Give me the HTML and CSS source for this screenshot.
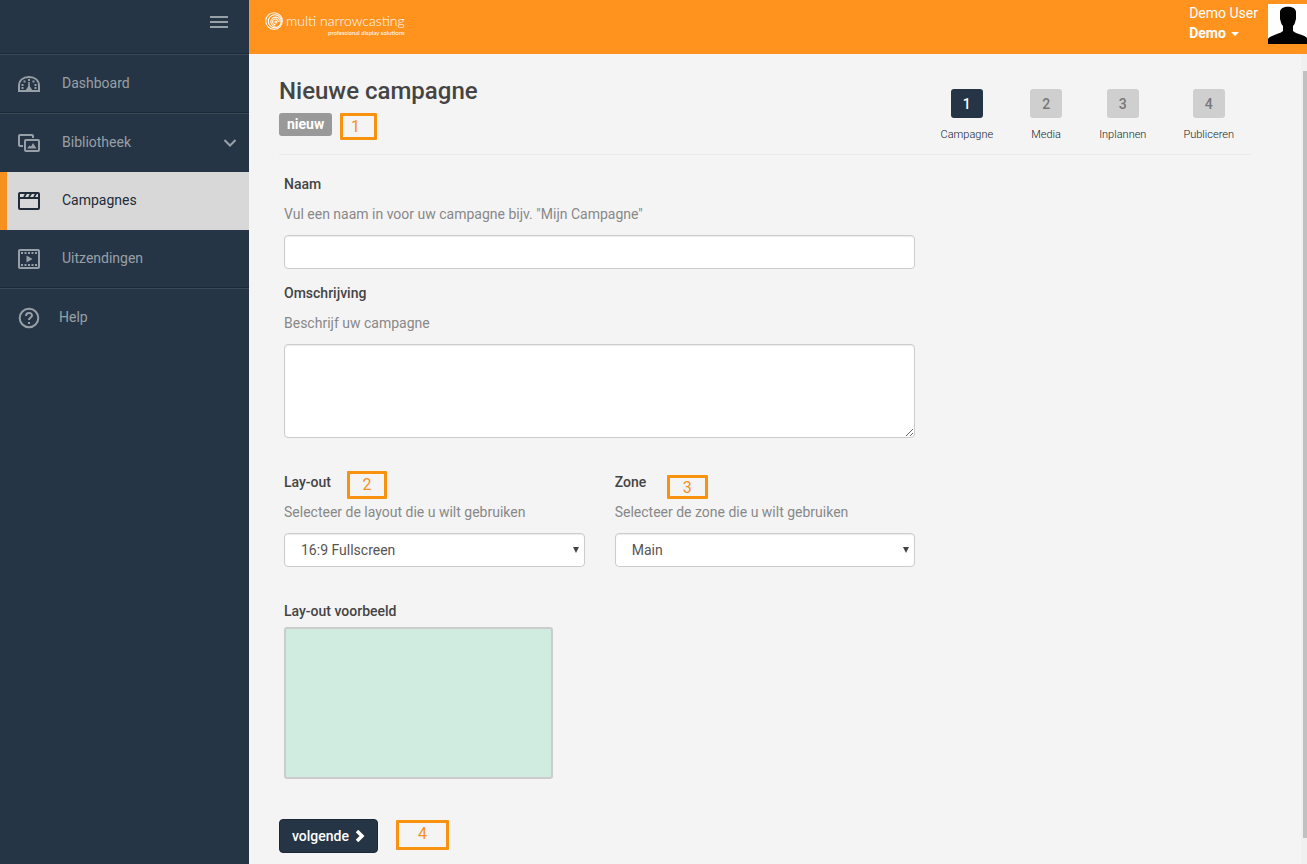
FILE: index.html
```html
<!DOCTYPE html>
<html lang="nl">
<head>
<meta charset="utf-8">
<title>Nieuwe campagne</title>
<link rel="stylesheet" href="styles.css">
</head>
<body>
<div class="app">
  <aside class="sidebar">
    <div class="sidebar-top">
      <button class="menu-toggle" type="button" aria-label="Menu">
        <svg width="18" height="12" viewBox="0 0 18 12"><path d="M0 1h18M0 6h18M0 11h18" stroke="currentColor" stroke-width="2"/></svg>
      </button>
    </div>
    <nav class="nav">
      <a class="nav-item lined-top lined-bottom" href="#">
        <svg class="nav-icon" width="24" height="24" viewBox="0 0 24 24" fill="none" stroke="currentColor"><path d="M2 19v-5C2 8.500 6 5 12 5s10 3.500 10 9v5z" stroke-width="2"/><path d="M12 10v6" stroke-width="1.600"/><path d="M12 13l3.500 5.500h-7z" fill="currentColor" stroke="none"/><path d="M11 7h2v2h-2zM6.500 8.500h2v2h-2zM15.500 8.500h2v2h-2zM4.500 12h2v2h-2zM17.500 12h2v2h-2zM4.500 15h2v2h-2zM17.500 15h2v2h-2z" fill="currentColor" stroke="none"/></svg>
        <span>Dashboard</span>
      </a>
      <a class="nav-item lined-top" href="#">
        <svg class="nav-icon" width="24" height="24" viewBox="0 0 24 24" fill="none" stroke="currentColor" stroke-width="2"><path d="M6 15H3Q2 15 2 14V5Q2 4 3 4h12Q16 4 16 5v2"/><rect x="8" y="9" width="14" height="11" rx="1"/><path d="M10 17.500l2.500-3 1.500 1 2-3.500 3.500 5.500z" fill="currentColor" stroke="none"/></svg>
        <span>Bibliotheek</span>
        <svg class="nav-chevron" width="12" height="8" viewBox="0 0 12 8" fill="none" stroke="currentColor" stroke-width="2"><path d="M.5 1L6 6.500 11.500 1"/></svg>
      </a>
      <a class="nav-item active" href="#">
        <svg class="nav-icon" width="24" height="24" viewBox="0 0 24 24" fill="none" stroke="currentColor" stroke-width="2"><rect x="2" y="4" width="20" height="16" rx="1"/><path d="M2 9h20"/><path d="M7 8l2.500-4M12 8l2.500-4M17 8l2.500-4" stroke-width="1.800"/></svg>
        <span>Campagnes</span>
      </a>
      <a class="nav-item lined-bottom" href="#">
        <svg class="nav-icon" width="24" height="24" viewBox="0 0 24 24" fill="none" stroke="currentColor"><rect x="2" y="3" width="20" height="18" rx="1" stroke-width="2"/><path d="M4 6h16M4 18h16" stroke-width="2" stroke-dasharray="2 1.500"/><path d="M9.500 8.500v7l6-3.500z" fill="currentColor" stroke="none"/></svg>
        <span>Uitzendingen</span>
      </a>
      <a class="nav-item help lined-top" href="#">
        <svg class="nav-icon" width="24" height="24" viewBox="0 0 24 24" fill="none" stroke="currentColor" stroke-width="2"><circle cx="12" cy="12" r="9.300"/><path d="M9 10c0-4 6-4 6-.5 0 2-3 2.200-3 4.500M12 16v2"/></svg>
        <span>Help</span>
      </a>
    </nav>
  </aside>

  <div class="page">
    <header class="topbar">
      <a class="brand" href="#">
        <svg class="brand-mark" width="19" height="19" viewBox="0 0 20 20" fill="none" stroke="#fff" stroke-width="1.100"><circle cx="9.500" cy="9.500" r="8.700"/><circle cx="10.300" cy="9.700" r="6.800"/><path d="M16 10.500A4.900 4.900 0 1 0 11 15.200"/><path d="M14 10.500A3 3 0 1 0 11 13.300"/><circle cx="11.500" cy="10.500" r="1.100"/></svg>
        <span class="brand-text">
          <span class="brand-name">multi narrowcasting</span>
          <span class="brand-tag">professional display solutions</span>
        </span>
      </a>
      <button class="user" type="button">
        <span class="user-text">
          <span>Demo User</span>
          <strong>Demo <i class="caret"></i></strong>
        </span>
        <svg class="avatar" width="39" height="40" viewBox="0 0 39 40"><path fill="#fff" d="M0 0h39v40H0z"/><path d="M0 40v-5c3-4 12-5 15-8v-5c-2-2-2-4-3-7V8c0-7 16-7 16 0v7c-1 3-1 5-3 7v5c3 3 12 4 14 7v6z"/></svg>
      </button>
    </header>

    <main class="content">
      <div class="heading">
        <div>
          <h1>Nieuwe campagne</h1>
          <div class="status"><span class="badge">nieuw</span><span class="callout callout-1">1</span></div>
        </div>
        <ol class="steps">
          <li class="current"><button type="button">1</button><span>Campagne</span></li>
          <li><button type="button">2</button><span>Media</span></li>
          <li><button type="button">3</button><span>Inplannen</span></li>
          <li><button type="button">4</button><span>Publiceren</span></li>
        </ol>
      </div>

      <form>
        <div class="fields">
          <div class="field">
            <label for="naam">Naam</label>
            <p>Vul een naam in voor uw campagne bijv. "Mijn Campagne"</p>
            <input id="naam" type="text">
          </div>
          <div class="field">
            <label for="omschrijving">Omschrijving</label>
            <p>Beschrijf uw campagne</p>
            <textarea id="omschrijving"></textarea>
          </div>
          <div class="pair">
            <div class="field">
              <label for="layout">Lay-out</label><span class="callout callout-2">2</span>
              <p>Selecteer de layout die u wilt gebruiken</p>
              <div class="select"><select id="layout"><option>16:9 Fullscreen</option></select></div>
            </div>
            <div class="field">
              <label for="zone">Zone</label><span class="callout callout-3">3</span>
              <p>Selecteer de zone die u wilt gebruiken</p>
              <div class="select"><select id="zone"><option>Main</option></select></div>
            </div>
          </div>
          <div class="preview-block">
            <h2>Lay-out voorbeeld</h2>
            <div class="preview"></div>
          </div>
        </div>
        <div class="actions">
          <button class="next" type="button">volgende
            <svg width="10" height="12" viewBox="0 0 10 12" fill="none" stroke="currentColor" stroke-width="3.500"><path d="M2 1l5 5-5 5"/></svg>
          </button>
          <span class="callout callout-4">4</span>
        </div>
      </form>
      <div class="scrollbar"><div class="thumb"></div></div>
    </main>
  </div>
</div>
</body>
</html>
```
FILE: styles.css
```css
* { box-sizing: border-box; }
body { margin: 0; font: 14px/20px Roboto, sans-serif; color: #444; background: #f4f4f4; }
button, input, textarea, select { font: inherit; color: inherit; }
button { border: 0; background: none; padding: 0; cursor: pointer; }
a { color: inherit; text-decoration: none; }
svg { display: block; flex: none; }
h1, h2, p, ol { margin: 0; padding: 0; }

.app { display: flex; min-height: 100vh; }

.sidebar { flex: none; width: 249px; background: #263545; color: #98a0a7; }
.sidebar-top { display: flex; justify-content: flex-end; align-items: flex-start; height: 54px; padding: 16px 21px; border-bottom: 1px solid #1b2937; }
.nav-item { display: flex; align-items: center; height: 59px; padding: 0 13px 0 17px; border: 0 solid; }
.nav-item span { padding-bottom: 2px; }
.nav-icon { margin-right: 21px; }
.nav-item.help .nav-icon { margin-right: 18px; }
.nav-chevron { margin-left: auto; }
.lined-top { border-top: 1px solid #3a4858; }
.lined-bottom { border-bottom: 1px solid #1b2937; }
.nav-item.active { height: 58px; padding-left: 10px; border-left: 7px solid #f6901e; background: #d8d8d8; color: #202c3a; }
.nav-item.active + .nav-item { height: 58px; }

.page { flex: 1; min-width: 0; display: flex; flex-direction: column; }
.topbar { display: flex; justify-content: space-between; align-items: flex-start; height: 54px; padding-left: 16px; background: #ff931e; color: #fff; }
.brand { display: flex; padding-top: 12px; }
.brand-text { display: flex; flex-direction: column; align-items: flex-end; margin-left: 2px; }
.brand-name { font: 300 14px/18px Lato, sans-serif; }
.brand-tag { font: 6px/6px Lato, sans-serif; }
.user { display: flex; padding-top: 4px; text-align: left; color: #fff; }
.user-text { display: flex; flex-direction: column; margin: -1px 10px 0 0; }
.caret { display: inline-block; margin-left: 2px; vertical-align: middle; border: 4px solid transparent; border-top-color: #fff; border-bottom: 0; }

.content { position: relative; flex: 1; padding: 24px 55px 11px 30px; }
.heading { display: flex; justify-content: space-between; height: 77px; border-bottom: 1px solid #ebebeb; }
h1 { font-size: 24px; line-height: 26px; font-weight: 500; }
.status { position: relative; display: flex; margin-top: 9px; }
.badge { height: 23px; padding: 0 8px; border-radius: 3px; background: #999; color: #fff; font-weight: 700; line-height: 23px; }
.steps { display: flex; gap: 37px; padding: 11px 18px 0 0; list-style: none; }
.steps li { display: flex; flex-direction: column; align-items: center; font-size: 11px; line-height: 14px; font-weight: 300; color: #101c2a; }
.steps button { width: 32px; height: 29px; margin-bottom: 10px; border-radius: 3px; background: #cfcfcf; color: #777; font-size: 14px; font-weight: 500; }
.steps .current button { background: #263545; color: #fff; }

.fields { width: 65.4%; padding: 19px 0 0 5px; min-width: 400px; }
.field { position: relative; margin-bottom: 14px; }
label, h2 { display: block; font-size: 14px; line-height: 20px; font-weight: 500; }
.field label { width: max-content; }
.field p { margin: 10px 0 11px; color: #888; }
input, textarea, select { display: block; width: 100%; height: 34px; padding: 6px 12px; border: 1px solid #ccc; border-radius: 4px; background: #fff; box-shadow: inset 0 1px 1px rgba(0, 0, 0, .08); }
textarea { height: 94px; resize: vertical; }
.pair { display: grid; grid-template-columns: 1fr 1fr; gap: 30px; padding-top: 20px; }
.select { position: relative; }
.select select { padding: 0 16px; appearance: none; color: #555; }
.select::after { content: ""; position: absolute; right: 6px; top: 14px; border: 3px solid transparent; border-top: 6px solid #444; border-bottom: 0; pointer-events: none; }
.preview-block { padding-top: 20px; }
.preview { width: 269px; height: 152px; margin-top: 6px; border: 2px solid #ccc; border-radius: 3px; background: #d0ebe0; }
.actions { position: relative; display: flex; margin-top: 40px; }
.next { display: flex; align-items: center; gap: 6px; height: 34px; padding: 0 12px; border: 1px solid #1b2937; border-radius: 4px; background: #263545; color: #fff; font-weight: 500; }

/* Numbered markers laid over the form */
.callout { position: absolute; display: flex; align-items: center; justify-content: center; border: 3px solid #f9930f; border-radius: 1px; color: #f6901e; font-size: 16px; line-height: 20px; }
.callout-1 { left: 61px; top: 0; width: 37px; height: 27px; padding-right: 6px; }
.callout-2 { left: 63px; top: -1px; width: 40px; height: 28px; }
.callout-3 { left: 52px; top: 3px; width: 41px; height: 24px; padding-top: 2px; }
.callout-4 { left: 117px; top: 1px; width: 53px; height: 30px; padding-bottom: 2px; }

.scrollbar { position: absolute; top: 0; right: 0; bottom: 0; width: 6px; padding: 17px 0 26px 2px; background: #f0f0f0; }
.thumb { height: 100%; background: #c1c1c1; }
```
